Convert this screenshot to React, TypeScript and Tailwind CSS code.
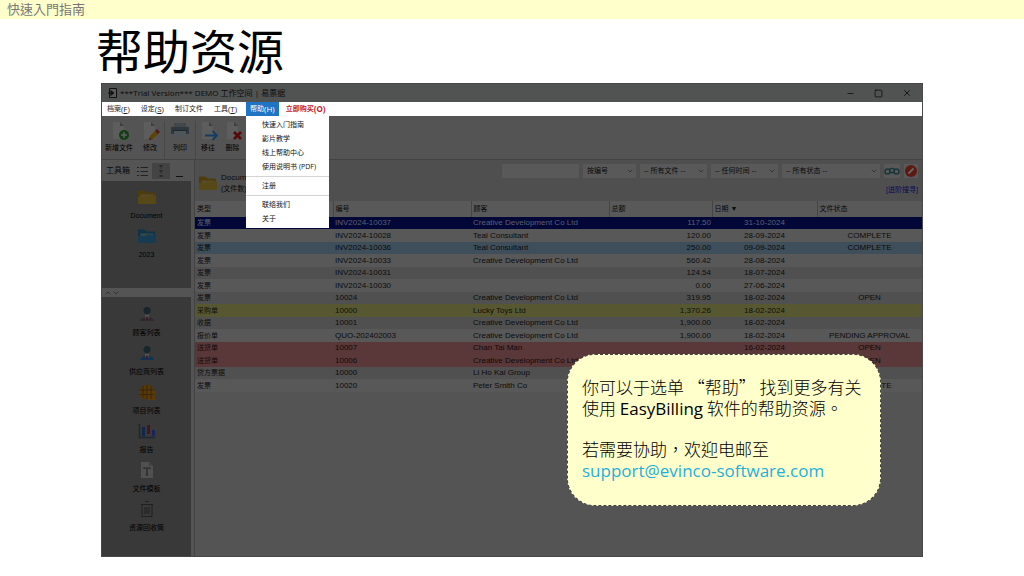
import type { ReactNode } from "react";
import { ChevronDown, ChevronUp, Minus, Square, X } from "lucide-react";

type RowData = {
  type: string;
  no: string;
  customer: string;
  total: string;
  date: string;
  status: string;
  tone: string;
};

const tone = {
  selected: "bg-[#020738] text-[#5c5f70]",
  plain: "bg-[#585858] text-[#0c0c0c]",
  alt: "bg-[#505050] text-[#0c0c0c]",
  blue: "bg-[#3e4e5a] text-[#0a0c0e]",
  yellow: "bg-[#575832] text-[#0e0e06]",
  red: "bg-[#5a3839] text-[#120808]",
};

const rows: RowData[] = [
  { type: "发票", no: "INV2024-10037", customer: "Creative Development Co Ltd", total: "117.50", date: "31-10-2024", status: "", tone: tone.selected },
  { type: "发票", no: "INV2024-10028", customer: "Teal Consultant", total: "120.00", date: "28-09-2024", status: "COMPLETE", tone: tone.plain },
  { type: "发票", no: "INV2024-10036", customer: "Teal Consultant", total: "250.00", date: "09-09-2024", status: "COMPLETE", tone: tone.blue },
  { type: "发票", no: "INV2024-10033", customer: "Creative Development Co Ltd", total: "560.42", date: "28-08-2024", status: "", tone: tone.plain },
  { type: "发票", no: "INV2024-10031", customer: "", total: "124.54", date: "18-07-2024", status: "", tone: tone.alt },
  { type: "发票", no: "INV2024-10030", customer: "", total: "0.00", date: "27-06-2024", status: "", tone: tone.plain },
  { type: "发票", no: "10024", customer: "Creative Development Co Ltd", total: "319.95", date: "18-02-2024", status: "OPEN", tone: tone.alt },
  { type: "采购单", no: "10000", customer: "Lucky Toys Ltd", total: "1,370.26", date: "18-02-2024", status: "", tone: tone.yellow },
  { type: "收据", no: "10001", customer: "Creative Development Co Ltd", total: "1,900.00", date: "18-02-2024", status: "", tone: tone.alt },
  { type: "报价单", no: "QUO-202402003", customer: "Creative Development Co Ltd", total: "1,900.00", date: "18-02-2024", status: "PENDING APPROVAL", tone: tone.plain },
  { type: "送货单", no: "10007", customer: "Chan Tai Man", total: "", date: "16-02-2024", status: "OPEN", tone: tone.red },
  { type: "送货单", no: "10006", customer: "Creative Development Co Ltd", total: "", date: "", status: "OPEN", tone: tone.red },
  { type: "贷方票据", no: "10000", customer: "Li Ho Kai Group", total: "", date: "", status: "", tone: tone.alt },
  { type: "发票", no: "10020", customer: "Peter Smith Co", total: "", date: "", status: "COMPLETE", tone: tone.plain },
];

const FolderIcon = ({ back, front }: { back: string; front: string }) => (
  <svg viewBox="0 0 20 18" className="h-[18px] w-5">
    <path d="M1 3.5a1 1 0 0 1 1-1h5.5l2 2H17a1 1 0 0 1 1 1V14H1z" fill={back} />
    <path d="M3.500 6.500h13v3h-13z" fill="#5b5640" opacity=".6" />
    <path d="M1 16V9h7l1.500-1.500H19V15a1 1 0 0 1-1 1z" fill={front} />
  </svg>
);

const PersonIcon = ({ body }: { body: string }) => (
  <svg viewBox="0 0 20 18" className="h-[18px] w-5">
    <circle cx="10" cy="5.500" r="3.500" fill="#16262a" />
    <path d="M3 16c1-3 3-4 7-4s6 1 7 4z" fill={body} />
    <path d="M8 10h4l-.6 4-1.400 2-1.400-2z" fill="#545454" />
    <path d="M9.400 11.500h1.200l.4 3-1 1.500-1-1.500z" fill="#3a1620" />
  </svg>
);

const BoxesIcon = () => (
  <svg viewBox="0 0 20 18" className="h-[18px] w-5">
    <path d="M2 6 7 2h7l3 5v4l-3 5H5l-3-3z" fill="#553709" />
    <path d="M10 8h8v9h-8z" fill="#5a3a0a" />
    <path d="M2 7h14M2 11.500h15M6 3v12M10 2v14M14 3v13" stroke="#33240e" strokeWidth=".8" />
  </svg>
);

const ReportIcon = () => (
  <svg viewBox="0 0 20 18" className="h-[18px] w-5">
    <path d="M2.500 2v13.500H18" stroke="#1d2836" strokeWidth="1.500" fill="none" />
    <path d="M5 5h3v9H5z" fill="#10264a" />
    <path d="M10 3h3v9h-3z" fill="#471426" />
    <path d="M15 8h3v6h-3z" fill="#19245a" />
  </svg>
);

const TemplateIcon = () => (
  <svg viewBox="0 0 20 18" className="h-[18px] w-5">
    <path d="M4 1h8l4 4v12H4z" fill="#505050" />
    <path d="M12 1v4h4z" fill="#434343" />
    <path d="M7 8V7h6v1M10 7v7M8.500 14h3" stroke="#262626" strokeWidth="1.200" fill="none" />
  </svg>
);

const BinIcon = () => (
  <svg viewBox="0 0 20 18" className="h-[18px] w-5" fill="none" stroke="#202020">
    <path d="M8 1.500h4M4 4.500h12M5 5v11.500h10V5" />
    <path d="M8 7v7M10 7v7M12 7v7" />
  </svg>
);

const PageShape = () => (
  <>
    <path d="M4 1h7l4 4v13H4z" fill="#5d5d5d" />
    <path d="M11 1v4h4z" fill="#3e3e3e" />
  </>
);

const AddIcon = () => (
  <svg viewBox="0 0 20 20" className="size-5">
    <PageShape />
    <circle cx="15" cy="14" r="5" fill="#163c16" />
    <path d="M15 11v6M12 14h6" stroke="#5f5f5f" strokeWidth="1.500" />
  </svg>
);

const EditIcon = () => (
  <svg viewBox="0 0 20 20" className="size-5">
    <PageShape />
    <path d="m9 19 1-4 5-5 3 3-5 5z" fill="#5c4308" />
    <path d="m15 10 2-2 3 3-2 2z" fill="#551818" />
    <path d="m9 19 .6-2.500 2 2z" fill="#551515" />
  </svg>
);

const PrintIcon = () => (
  <svg viewBox="0 0 20 20" className="size-5">
    <path d="M4 2h12v4H4z" fill="#43474a" />
    <path d="M1 6h18v7H1z" fill="#2c383e" />
    <path d="M4 10h12v6H4z" fill="#4f5659" />
    <path d="M3 9.500h14" stroke="#1c262b" />
  </svg>
);

const MoveIcon = () => (
  <svg viewBox="0 0 20 20" className="size-5">
    <PageShape />
    <path d="M7 14.500h12M14.500 10l4.500 4.500-4.500 4.500" stroke="#143c63" strokeWidth="1.800" fill="none" />
  </svg>
);

const DeleteIcon = () => (
  <svg viewBox="0 0 20 20" className="size-5">
    <PageShape />
    <path d="m11 11 7 7M18 11l-7 7" stroke="#560a0a" strokeWidth="2.800" />
  </svg>
);

const tools = [
  { label: "新增文件", icon: <AddIcon />, style: "w-[34px]" },
  { label: "修改", icon: <EditIcon />, style: "w-[28px]" },
  { label: "列印", icon: <PrintIcon />, style: "w-[31px] border-l border-[#474747]" },
  { label: "移往", icon: <MoveIcon />, style: "w-[25px] border-l border-[#474747]" },
  { label: "删除", icon: <DeleteIcon />, style: "w-[25px]" },
];

const folders = [
  { label: "Document", icon: <FolderIcon back="#4d3c0c" front="#574818" /> },
  { label: "2023", icon: <FolderIcon back="#0f3349" front="#173b53" /> },
];

const shortcuts = [
  { label: "顾客列表", icon: <PersonIcon body="#30282d" /> },
  { label: "供应商列表", icon: <PersonIcon body="#0f3257" /> },
  { label: "项目列表", icon: <BoxesIcon /> },
  { label: "报告", icon: <ReportIcon /> },
  { label: "文件模板", icon: <TemplateIcon /> },
  { label: "资源回收筒", icon: <BinIcon /> },
];

const menus = [
  { label: "档案", hotkey: "F" },
  { label: "设定", hotkey: "S" },
  { label: "制订文件", hotkey: "" },
  { label: "工具", hotkey: "T" },
];

const helpGroups = [
  ["快速入门指南", "影片教学", "线上帮助中心", "使用说明书 (PDF)"],
  ["注册"],
  ["联络我们", "关于"],
];

const filters = [
  { name: "搜寻栏位", value: "按编号", width: "w-[53px]" },
  { name: "文件", value: "-- 所有文件 --", width: "w-[67px]" },
  { name: "时间", value: "-- 任何时间 --", width: "w-[67px]" },
  { name: "状态", value: "-- 所有状态 --", width: "w-[98px]" },
];

const SideItem = ({ label, icon }: { label: string; icon: ReactNode }) => (
  <button className="flex h-[39px] w-full flex-col items-center gap-[3px] text-[7px] leading-[14px] text-black">
    {icon}
    {label}
  </button>
);

const Filter = ({ name, value, width }: { name: string; value: string; width: string }) => (
  <div className={`relative ${width}`}>
    <select
      aria-label={name}
      className="block h-[14px] w-full appearance-none bg-[#595959] pl-1 text-[7px] leading-[14px] text-[#0a0a0a]"
    >
      <option>{value}</option>
    </select>
    <ChevronDown className="pointer-events-none absolute top-[3px] right-[2px] size-2 text-[#222]" strokeWidth={2} />
  </div>
);

const MenuBar = () => (
  <nav className="flex h-[14px] items-stretch gap-px bg-white font-['Open_Sans','Noto_Sans_CJK_SC',sans-serif] text-[8px] leading-[14px] text-[#222]">
    {menus.map((m) => (
      <button key={m.label} className="flex px-[5px]">
        <span className="text-[7px]">{m.label}</span>
        {m.hotkey && (
          <span>
            (<u>{m.hotkey}</u>)
          </span>
        )}
      </button>
    ))}
    <div className="relative ml-[3px]">
      <button className="flex bg-[#1f74c4] px-1 text-white">
        <span className="text-[7px]">帮助</span>(H)
      </button>
      <div className="absolute top-[14px] left-0 z-10 w-[83px] divide-y divide-[#d4d4d4] bg-white">
        {helpGroups.map((group) => (
          <div key={group[0]} className="py-[2px]">
            {group.map((item) => (
              <button key={item} className="block h-[14px] w-full pl-4 text-left text-[7px] whitespace-nowrap text-[#111]">
                {item}
              </button>
            ))}
          </div>
        ))}
      </div>
    </div>
    <button className="flex px-[6px] font-bold text-[#c41d1d]">
      <span className="text-[7px]">立即购买</span>(O)
    </button>
  </nav>
);

const DocumentTable = () => (
  <table className="w-full table-fixed border-collapse text-[8px] leading-[12px]">
    <colgroup>
      <col className="w-[138px]" />
      <col className="w-[138px]" />
      <col className="w-[138px]" />
      <col className="w-[103px]" />
      <col className="w-[105px]" />
      <col className="w-[105px]" />
    </colgroup>
    <thead>
      <tr className="h-[16px] bg-[#595959] text-[7px] text-[#0a0a0a]">
        {["类型", "编号", "顾客", "总额", "日期 ▼", "文件状态"].map((h) => (
          <th key={h} className="border-r border-[#454545] p-0 pl-[2px] text-left font-normal last:border-0">
            {h}
          </th>
        ))}
      </tr>
    </thead>
    <tbody>
      {rows.map((r, i) => (
        <tr key={i} className={`h-[12px] even:h-[13px] ${r.tone}`}>
          <td className="p-0 pl-[2px] text-[7px]">{r.type}</td>
          <td className="p-0 pl-[2px]">{r.no}</td>
          <td className="p-0 pl-[2px] whitespace-nowrap">{r.customer}</td>
          <td className="p-0 pr-px text-right">{r.total}</td>
          <td className="p-0 text-center">{r.date}</td>
          <td className="p-0 text-center whitespace-nowrap">{r.status}</td>
        </tr>
      ))}
    </tbody>
  </table>
);

const AppWindow = () => (
  <div className="border border-[#484848] bg-[#545454]">
    <div className="flex h-[18px] items-center bg-[#515252] pr-[10px] pl-[6px] font-['Open_Sans','Noto_Sans_CJK_SC',sans-serif] text-[8px] text-[#0c0c0c]">
      <svg viewBox="0 0 9 10" className="mr-[3px] h-[10px] w-[9px]">
        <path d="M1.500.5h7v9h-7z" fill="#595959" stroke="#111" />
        <path d="M0 5h5M3 3l2.500 2L3 7z" stroke="#111" strokeWidth="1.200" fill="#111" />
      </svg>
      <span className="grow">***Trial Version*** DEMO 工作空间 | 易票据</span>
      <div className="flex gap-[19px]">
        <button aria-label="最小化"><Minus className="size-[9px]" /></button>
        <button aria-label="最大化"><Square className="size-[9px]" /></button>
        <button aria-label="关闭"><X className="size-[10px]" /></button>
      </div>
    </div>
    <MenuBar />
    <div className="flex h-[44px] border-b border-[#434343] pt-[5px]">
      {tools.map((t) => (
        <button key={t.label} className={`flex shrink-0 flex-col items-center text-[7px] leading-[14px] whitespace-nowrap text-black ${t.style}`}>
          {t.icon}
          {t.label}
        </button>
      ))}
    </div>
    <div className="flex">
      <aside className="flex w-[89px] shrink-0 flex-col">
        <div className="flex h-[21px] items-center pl-1 text-[8px] text-[#0a0a0a]">
          <span className="grow">工具箱</span>
          <button aria-label="列表" className="mr-[4px]">
            <svg viewBox="0 0 11 10" className="h-[10px] w-[11px]" stroke="#222">
              <path d="M0 1.500h2M0 5.500h2M0 9.500h2M3.500 1.500H11M3.500 5.500H11M3.500 9.500H11" />
            </svg>
          </button>
          <button aria-label="图标" className="flex h-[16px] w-[18px] items-center justify-center bg-[#434343]">
            <svg viewBox="0 0 6 12" className="h-3 w-[6px]" fill="#2a2a2a">
              <path d="M1.500 0h3v2h-3zM1.500 5h3v2h-3zM1.500 10h3v2h-3z" />
              <path d="M2 3h2M2 8h2" stroke="#333" />
            </svg>
          </button>
          <button aria-label="收起" className="mr-2 ml-[6px] h-[12px] w-[7px] border-b border-[#111]" />
        </div>
        <div className="h-[107px] bg-[#393939] pt-[7px]">
          {folders.map((f) => (
            <SideItem key={f.label} {...f} />
          ))}
        </div>
        <div className="flex h-[9px] items-center pl-[2px] text-[#222]">
          <ChevronUp className="size-2" />
          <ChevronDown className="size-2" />
        </div>
        <div className="grow bg-[#393939] pt-2 pb-[17px]">
          {shortcuts.map((s) => (
            <SideItem key={s.label} {...s} />
          ))}
        </div>
      </aside>
      <main className="ml-[3px] grow border-l border-[#434343]">
        <div className="flex h-[41px] bg-[#4f4f4f] pt-[4px] pr-[4px]">
          <div className="flex grow items-center gap-[3px] pl-[3px] text-[8px] leading-[11px] text-[#0a0a0a]">
            <FolderIcon back="#4d3c0c" front="#574818" />
            <div>
              <div>Document</div>
              <div className="text-[7px]">(文件数)</div>
            </div>
          </div>
          <div className="flex flex-col items-end gap-[5px]">
            <div className="flex gap-1">
              <input aria-label="搜寻" className="h-[14px] w-[77px] bg-[#595959] px-1 text-[8px]" />
              {filters.map((f) => (
                <Filter key={f.name} {...f} />
              ))}
              <button aria-label="搜寻文件" className="flex h-[14px] w-[16px] items-center justify-center bg-[#595959]">
                <svg viewBox="0 0 16 10" className="h-[10px] w-4" fill="none" stroke="#1a3638" strokeWidth="1.500">
                  <circle cx="3.500" cy="5.500" r="2.500" />
                  <circle cx="12.500" cy="5.500" r="2.500" />
                  <path d="M5.500 3.500C7 2 9 2 10.500 3.500M6 6.500h4" />
                </svg>
              </button>
              <button aria-label="清除" className="flex h-[14px] w-[14px] items-center justify-center bg-[#595959]">
                <svg viewBox="0 0 12 12" className="size-3">
                  <circle cx="6" cy="6" r="6" fill="#5c1a12" />
                  <path d="m3.500 8.500 5-5" stroke="#666" strokeWidth="1.800" />
                </svg>
              </button>
            </div>
            <a href="#advanced" className="text-[7px] leading-[14px] text-[#0a0a5a]">[进阶搜寻]</a>
          </div>
        </div>
        <DocumentTable />
      </main>
    </div>
  </div>
);

const HelpCallout = () => (
  <div className="absolute right-[42px] bottom-[51px] w-[314px] rounded-[28px] border border-dashed border-[#444] bg-[#ffffcc] px-[14px] pt-[21px] pb-[24px] font-['Noto_Sans_CJK_TC',sans-serif] text-[17px] leading-[21px] font-light text-black">
    <p className="whitespace-nowrap">
      你可以于选单 “帮助” 找到更多有关
      <br />
      使用 <span className="font-['Open_Sans',sans-serif] font-normal">EasyBilling</span> 软件的帮助资源。
    </p>
    <p className="mt-[19px]">
      若需要协助，欢迎电邮至
      <br />
      <a href="mailto:support@evinco-software.com" className="font-['Open_Sans',sans-serif] font-normal text-[#1fb0d8]">
        support@evinco-software.com
      </a>
    </p>
  </div>
);

const App = () => {
  return (
    <div className="min-h-screen bg-white font-['Liberation_Sans','Noto_Sans_CJK_SC',sans-serif]">
      <header className="h-[19px] bg-[#ffffcc] pl-[7px] font-['Noto_Sans_CJK_TC',sans-serif] text-[13px] leading-[17px] text-[#777]">
        快速入門指南
      </header>
      <div className="mx-[101px]">
        <h1 className="-ml-[5px] h-[64px] font-['Open_Sans','Noto_Sans_CJK_SC',sans-serif] text-[47px] leading-[64px] font-normal text-black">
          帮助资源
        </h1>
        <div className="relative">
          <AppWindow />
          <HelpCallout />
        </div>
      </div>
    </div>
  );
};

export default App;
